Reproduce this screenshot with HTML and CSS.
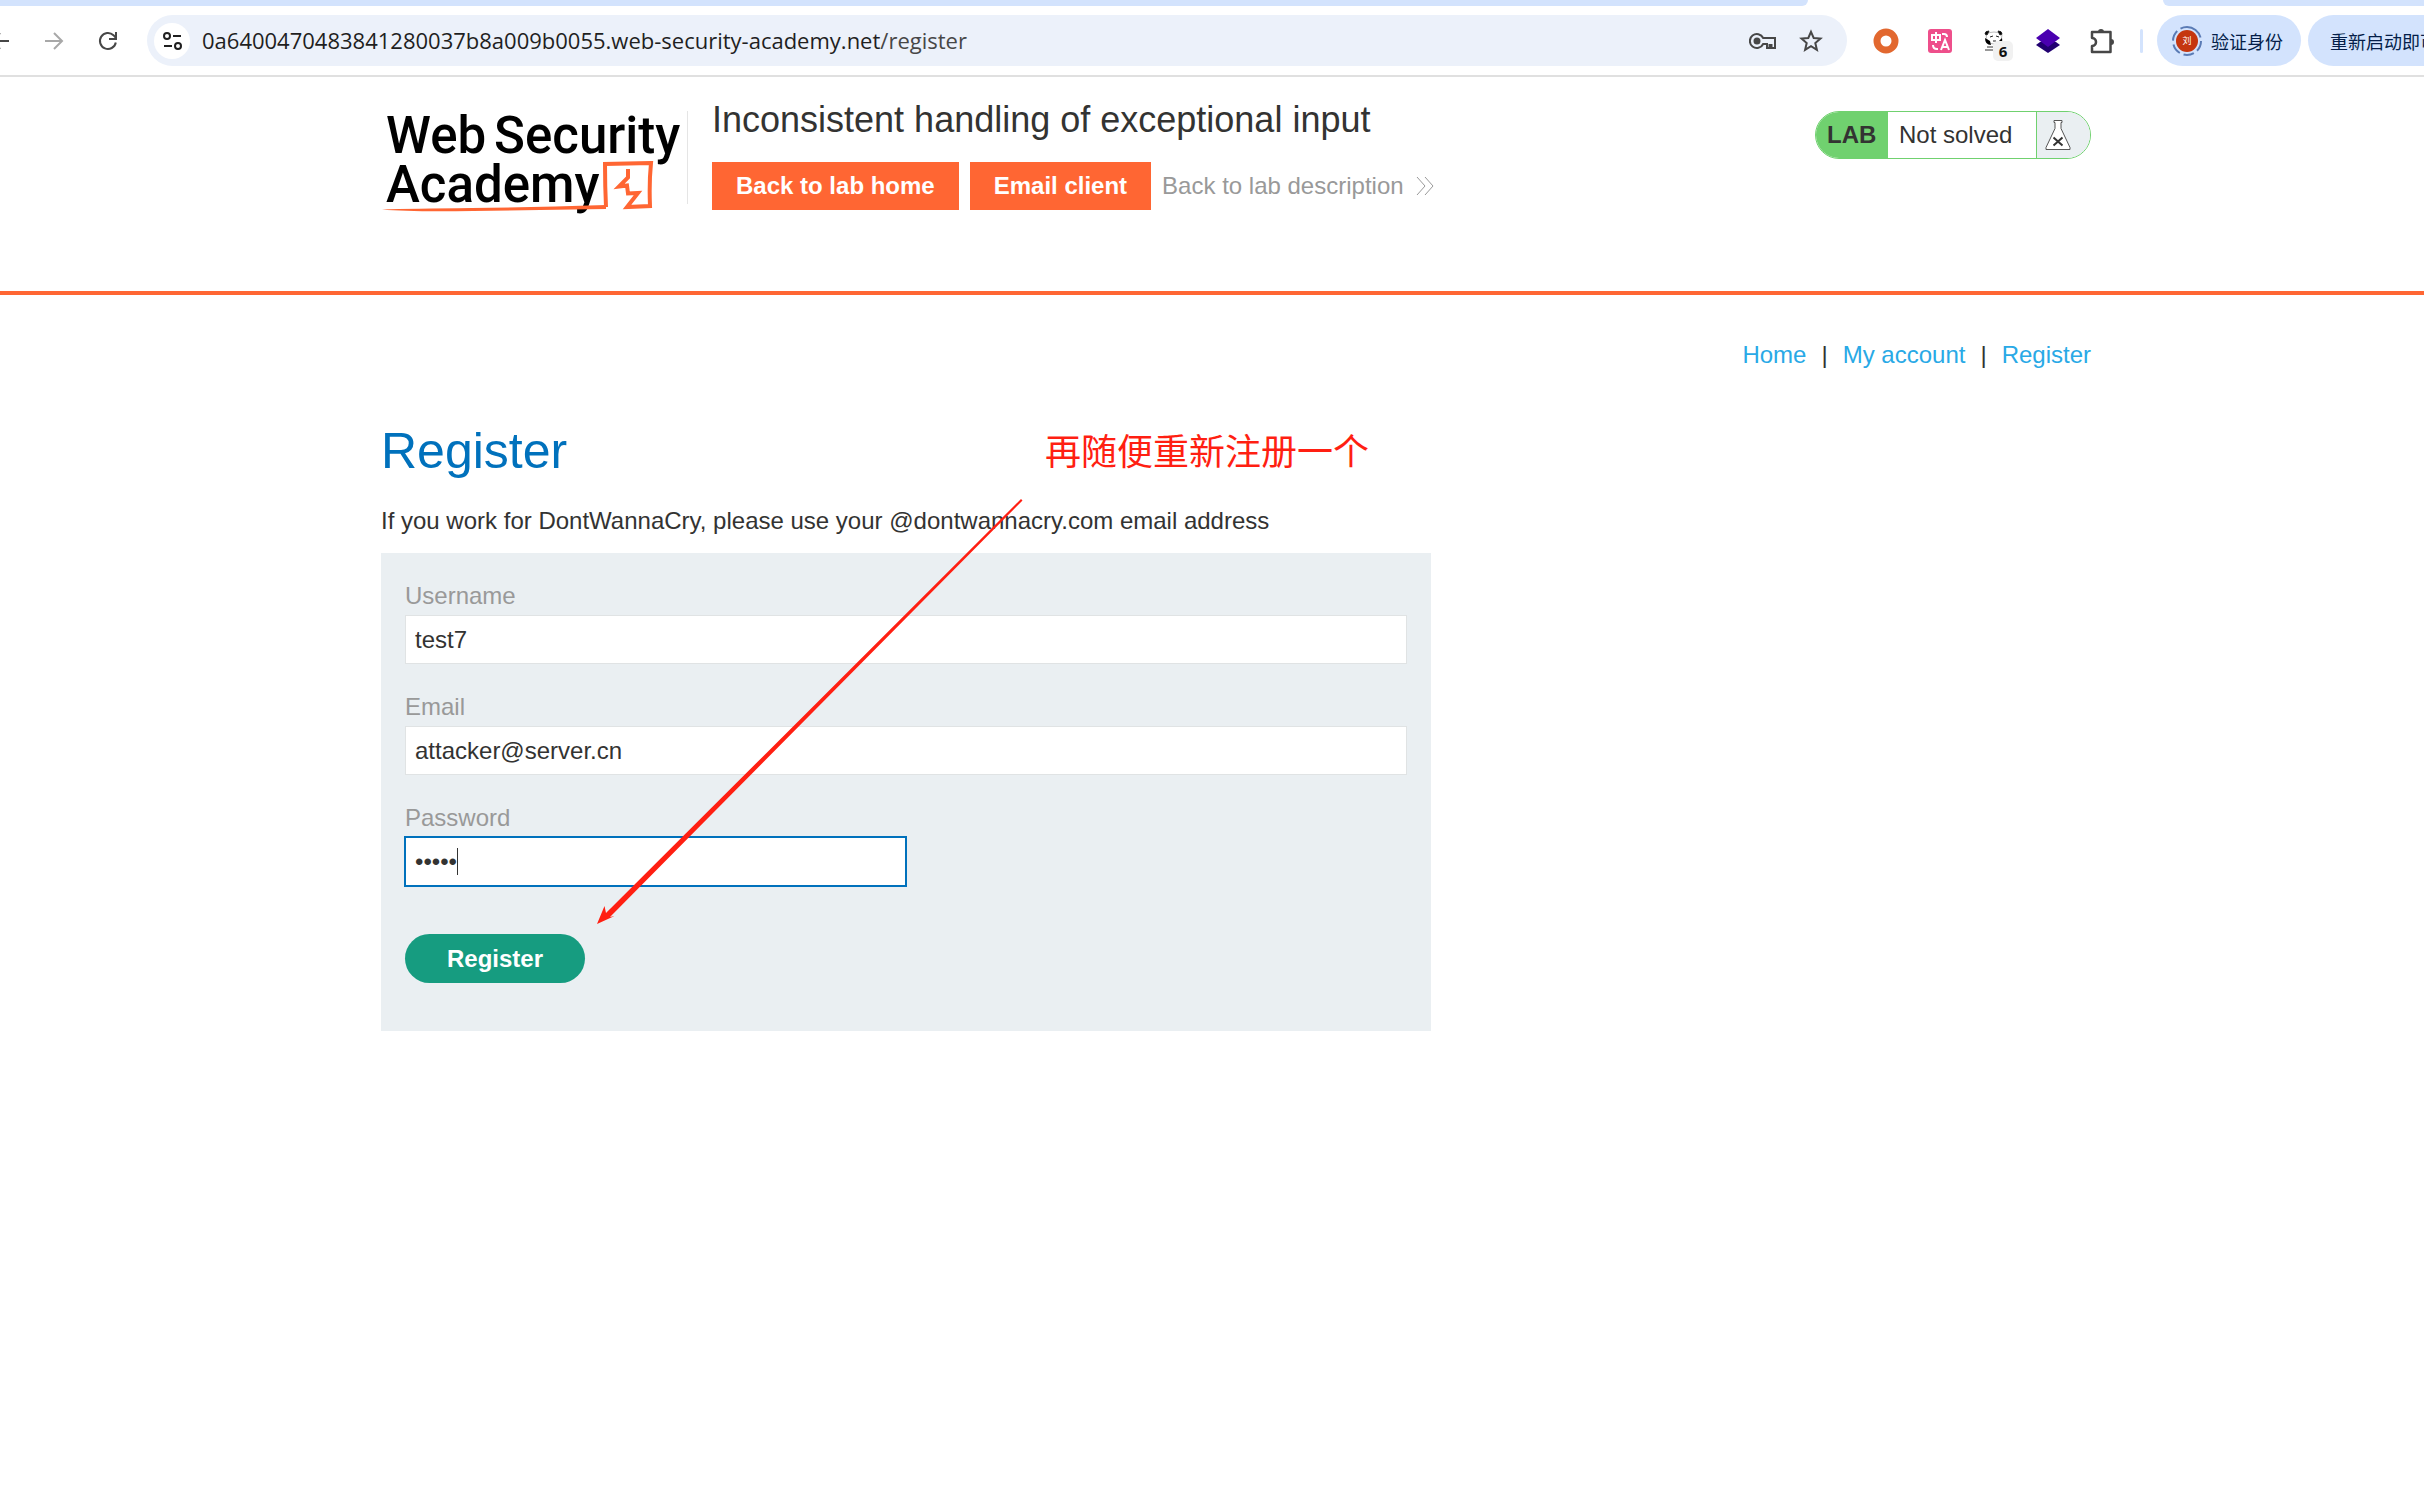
FILE: index.html
```html
<!DOCTYPE html>
<html lang="en">
<head>
  <meta charset="UTF-8">
  <meta name="viewport" content="width=device-width, initial-scale=1.0">
  <title>Inconsistent handling of exceptional input</title>
  <link rel="stylesheet" href="styles.css">
</head>
<body>
  <div class="browser">
    <div class="tab-strip">
      <div class="tabs-left"></div>
      <div class="tabs-right"></div>
    </div>
    <div class="toolbar">
      <div class="history">
        <button class="tool" aria-label="Back">
          <svg width="24" height="24" viewBox="0 0 24 24" fill="none" stroke="#474747" stroke-width="2"><path d="M21 12H4M12 4l-8 8 8 8"/></svg>
        </button>
        <button class="tool" aria-label="Forward">
          <svg width="24" height="24" viewBox="0 0 24 24" fill="none" stroke="#a8a8a8" stroke-width="2"><path d="M3 12h17M12 4l8 8-8 8"/></svg>
        </button>
        <button class="tool" aria-label="Reload">
          <svg width="24" height="24" viewBox="0 0 24 24" fill="none" stroke="#474747" stroke-width="2"><path d="M19.800 13.500A8 8 0 1 1 17.500 6.200L20 9"/><path d="M20 3v7h-7"/></svg>
        </button>
      </div>
      <div class="omnibox">
        <button class="site-info" aria-label="Site information">
          <svg width="20" height="20" viewBox="0 0 20 20" fill="none" stroke="#1f1f1f" stroke-width="2"><circle cx="5" cy="5" r="3"/><path d="M11 5h8M2 15h8"/><circle cx="16" cy="15" r="3"/></svg>
        </button>
        <div class="url">0a6400470483841280037b8a009b0055.web-security-academy.net<span class="url-path">/register</span></div>
        <button class="tool" aria-label="Passwords">
          <svg width="28" height="24" viewBox="0 0 28 24" fill="none" stroke="#474747" stroke-width="2"><path d="M14.200 9A7 7 0 1 0 14.200 15H18v4h2.500v-3h2v3H26V9z"/><circle cx="8" cy="12" r="2.500" fill="#474747"/></svg>
        </button>
        <button class="tool" aria-label="Bookmark">
          <svg width="24" height="24" viewBox="0 0 24 24" fill="none" stroke="#474747" stroke-width="2"><path d="M12 2.800l2.700 6.200 6.800.6-5.200 4.500 1.600 6.700-5.900-3.600-5.900 3.600 1.600-6.700L2.500 9.600l6.800-.6z"/></svg>
        </button>
      </div>
      <div class="extensions">
        <button class="tool" aria-label="Proxy">
          <svg width="26" height="26" viewBox="0 0 26 26"><circle cx="13" cy="13" r="9" fill="#fff" stroke="#e2682f" stroke-width="7"/></svg>
        </button>
        <button class="tool" aria-label="Translate">
          <svg width="26" height="26" viewBox="0 0 26 26" fill="none" stroke="#fff" stroke-width="2"><rect x="1" y="1" width="24" height="24" rx="3" fill="#ee4f8b" stroke="none"/><path d="M5 7h8v5H5zM9 4v11M14 22l4-10 4 10M15.500 19h5M15 6h2q3 0 3 3M6 17q0 4 4 4h1"/></svg>
        </button>
        <button class="tool panda" aria-label="Panda">
          <svg width="26" height="26" viewBox="0 0 26 26"><path d="M5 6q0 10 8 10t8-10q-8-4-16 0z" fill="#fff" stroke="#bbb"/><path d="M4 6q0-3 4-3l-2 4zM21 6q0-3-4-3l2 4zM9 9l3-1M15 8l3 1M12 13h3" stroke="#222"/><path d="M4 10q0 7 6 7l-1-4zM21 10q1 5-2 7l-2-3z"/><path d="M6 19h6M4 22h9" stroke="#333"/></svg>
          <span class="badge">6</span>
        </button>
        <button class="tool" aria-label="Layers">
          <svg width="26" height="26" viewBox="0 0 26 26"><path d="M1 17l4-3h16l4 3-12 8z" fill="#210070"/><path d="M13 1l12 9-12 9-12-9z" fill="#4a00b0"/></svg>
        </button>
        <button class="tool" aria-label="Extensions">
          <svg width="26" height="26" viewBox="0 0 26 26"><path d="M3 4h18.500v20H3v-6q4-.5 4-4t-4-4z" fill="none" stroke="#474747" stroke-width="2.500" stroke-linejoin="round"/><path d="M9 4a3 3 0 0 1 6 0zM22 11a3 3 0 0 1 0 6z" fill="#474747"/></svg>
        </button>
      </div>
      <div class="separator"></div>
      <button class="chip">
        <svg width="30" height="30" viewBox="0 0 30 30"><circle cx="15" cy="15" r="14" fill="none" stroke="#5a7bb5" stroke-width="2" stroke-dasharray="10.700 4 10.700 4 10.700 4 10.700 4 25 4"/><circle cx="15" cy="15" r="11" fill="#c5360f"/><text class="avatar-text" x="15" y="18" text-anchor="middle">刘</text></svg>
        验证身份
      </button>
      <button class="chip chip-update">重新启动即可</button>
    </div>
  </div>

  <header class="lab-header">
    <a class="logo" href="#" aria-label="Web Security Academy">
      <span class="logo-line"><span>Web</span><span>Security</span></span>
      <span class="logo-line">Academy</span>
      <svg class="logo-mark" width="276" height="54" viewBox="0 0 276 54" fill="none" stroke="#ff6633"><path d="M1 48.500q30-1 90-1.500t134-3v4q-70 1-133 2T1 48.500z" fill="#ff6633" stroke="none"/><path d="M225 46q-1-20-1-43L270 2q-2 20-1 43l-23 1 11-14-10 .5-1-8-8 1 9-9V8" stroke-width="4"/></svg>
    </a>
    <div class="lab-info">
      <h2>Inconsistent handling of exceptional input</h2>
      <div class="lab-links">
        <a class="lab-button" href="#">Back to lab home</a>
        <a class="lab-button" href="#">Email client</a>
        <a class="lab-description" href="#">Back to lab description
          <svg width="18" height="20" viewBox="0 0 18 20" fill="none" stroke="#999"><path d="M1 1l8 9-8 9M9 1l8 9-8 9"/></svg>
        </a>
      </div>
    </div>
    <div class="lab-status">
      <span class="lab-tag">LAB</span>
      <span class="lab-state">Not solved</span>
      <span class="lab-flask">
        <svg width="26" height="32" viewBox="0 0 26 32" fill="#fff" stroke="#555"><path d="M9 1.500h8v2h-1v6l9 19v2H1v-2l9-19v-6H9z"/><path d="M8.500 18.500l9 8M17.500 18.500l-9 8" stroke="#333" stroke-width="2"/></svg>
      </span>
    </div>
  </header>

  <main class="container">
    <nav class="account-links">
      <a href="#">Home</a><span>|</span>
      <a href="#">My account</a><span>|</span>
      <a href="#">Register</a>
    </nav>
    <h1>Register</h1>
    <p class="hint">If you work for DontWannaCry, please use your @dontwannacry.com email address</p>
    <form class="register-form">
      <label for="username">Username</label>
      <input type="text" id="username" value="test7">
      <label for="email">Email</label>
      <input type="email" id="email" value="attacker@server.cn">
      <label for="password">Password</label>
      <div class="password">
        <input type="password" id="password" value="12345">
        <span class="caret"></span>
      </div>
      <button class="submit" type="submit">Register</button>
    </form>

    <div class="note">再随便重新注册一个</div>
    <svg class="arrow" width="426" height="426" viewBox="0 0 426 426" fill="#ff1f12"><path d="M0 425L7.500 407l1.500 7L424 0l1.500 1.500L13 418l4.500-1z"/></svg>
  </main>
</body>
</html>
```

FILE: styles.css
```css
* {
  box-sizing: border-box;
}
body {
  margin: 0;
  font-family: Arial, "Liberation Sans", sans-serif;
  font-size: 24px;
  line-height: 36px;
  color: #333332;
  background-color: #ffffff;
}
a {
  text-decoration: none;
}
button {
  font-family: inherit;
  border: none;
  padding: 0;
  background: none;
  cursor: pointer;
}

/* Browser bar */
.browser {
  border-bottom: 2px solid #e0e0e0;
  overflow: hidden;
}
.tab-strip {
  display: flex;
  justify-content: space-between;
  height: 6px;
}
.tabs-left, .tabs-right {
  background-color: #d3e3fd;
}
.tabs-left {
  width: 1808px;
  border-bottom-right-radius: 12px;
}
.tabs-right {
  width: 261px;
  border-bottom-left-radius: 12px;
}
.toolbar {
  display: flex;
  align-items: center;
  height: 69px;
  margin-left: -12px;
}
.tool {
  display: flex;
  flex-shrink: 0;
}
.history {
  display: flex;
  gap: 30px;
  margin-right: 27px;
}
.omnibox {
  flex: 1;
  display: flex;
  align-items: center;
  gap: 22px;
  height: 51px;
  padding: 0 24px 0 7px;
  border-radius: 26px;
  background-color: #ecf1fa;
}
.site-info {
  display: flex;
  align-items: center;
  justify-content: center;
  width: 36px;
  height: 36px;
  margin-right: -10px;
  border-radius: 50%;
  background-color: #ffffff;
}
.url {
  flex: 1;
  padding-bottom: 2px;
  font-family: "Open Sans", sans-serif;
  font-size: 22px;
  color: #1f1f1f;
  white-space: nowrap;
}
.url-path {
  color: #474747;
}
.extensions {
  display: flex;
  gap: 28px;
  margin: 0 25px 0 26px;
}
.panda {
  position: relative;
}
.badge {
  position: absolute;
  left: 12px;
  top: 13px;
  width: 20px;
  height: 20px;
  border-radius: 5px;
  background-color: #f1f1f1;
  font-family: "Open Sans", sans-serif;
  font-size: 15px;
  font-weight: bold;
  line-height: 20px;
  text-align: center;
  color: #111111;
}
.separator {
  width: 3px;
  height: 24px;
  margin-right: 14px;
  border-radius: 2px;
  background-color: #d3e3fd;
}
.chip {
  display: flex;
  align-items: center;
  gap: 9px;
  flex-shrink: 0;
  width: 144px;
  height: 51px;
  padding-left: 15px;
  border-radius: 26px;
  background-color: #d3e3fd;
  font-family: "Noto Sans CJK SC", sans-serif;
  font-size: 18px;
  color: #041e49;
  white-space: nowrap;
  overflow: hidden;
}
.chip-update {
  width: 116px;
  margin-left: 7px;
  padding-left: 22px;
  border-radius: 26px 0 0 26px;
}
.avatar-text {
  font-size: 9px;
  fill: #ffffff;
}

/* Lab header */
.lab-header {
  display: flex;
  align-items: flex-start;
  padding: 22px 333px 81px 381px;
  border-bottom: 4px solid #ff6633;
}
.logo {
  position: relative;
  display: flex;
  flex-direction: column;
  width: 307px;
  height: 93px;
  margin: 12px 24px 0 0;
  padding-left: 5px;
  border-right: 1px solid #e5e5e5;
  font-family: "Roboto", sans-serif;
  font-size: 51px;
  font-weight: 500;
  line-height: 49px;
  color: #000000;
}
.logo-line {
  display: flex;
  gap: 8px;
}
.logo-mark {
  position: absolute;
  left: 0;
  top: 50px;
}
.lab-info {
  flex: 1;
}
.lab-info h2 {
  margin: 0 0 21px;
  font-size: 36px;
  font-weight: normal;
  line-height: 42px;
}
.lab-links {
  display: flex;
  gap: 11px;
  line-height: 48px;
}
.lab-button {
  padding: 0 24px;
  background-color: #ff6633;
  font-weight: bold;
  color: #ffffff;
}
.lab-description {
  display: flex;
  align-items: center;
  gap: 12px;
  color: #999999;
}
.lab-status {
  display: flex;
  height: 48px;
  margin-top: 12px;
  border: 1px solid #70d16f;
  border-radius: 24px;
  overflow: hidden;
  line-height: 46px;
}
.lab-tag {
  width: 72px;
  padding-left: 11px;
  background-color: #70d16f;
  font-weight: bold;
}
.lab-state {
  width: 148px;
  padding-left: 11px;
}
.lab-flask {
  display: flex;
  align-items: center;
  width: 54px;
  padding-left: 8px;
  border-left: 1px solid #70d16f;
  background-color: #eaeff2;
}

/* Page content */
.container {
  position: relative;
  padding: 42px 333px 0 381px;
}
.account-links {
  display: flex;
  justify-content: flex-end;
  gap: 15px;
}
.account-links a {
  color: #29a9e6;
}
h1 {
  margin: 48px 0 22px;
  font-size: 50px;
  font-weight: normal;
  line-height: 60px;
  color: #0071bc;
}
.hint {
  margin: 0 0 14px;
}
.register-form {
  width: 1050px;
  padding: 24px 24px 48px;
  background-color: #eaeff2;
}
label {
  display: block;
  line-height: 38px;
  color: #999999;
}
input {
  display: block;
  width: 100%;
  height: 49px;
  margin-bottom: 24px;
  padding: 0 9px;
  border: 1px solid #e0e3e4;
  font-family: inherit;
  font-size: 24px;
  color: #333332;
  background-color: #ffffff;
}
.password {
  position: relative;
  width: 501px;
}
.password input {
  margin-bottom: 48px;
  border-color: #0071bc;
  outline: 1px solid #0071bc;
}
.caret {
  position: absolute;
  left: 52px;
  top: 11px;
  width: 1px;
  height: 27px;
  background-color: #333332;
}
.submit {
  display: block;
  height: 49px;
  padding: 0 42px;
  border-radius: 25px;
  background-color: #169c80;
  font-size: 24px;
  font-weight: bold;
  color: #ffffff;
}

/* Annotation over the page */
.note {
  position: absolute;
  left: 1045px;
  top: 128px;
  font-family: "Noto Sans CJK SC", sans-serif;
  font-size: 36px;
  line-height: 52px;
  color: #ff1f12;
}
.arrow {
  position: absolute;
  left: 597px;
  top: 204px;
}
```
